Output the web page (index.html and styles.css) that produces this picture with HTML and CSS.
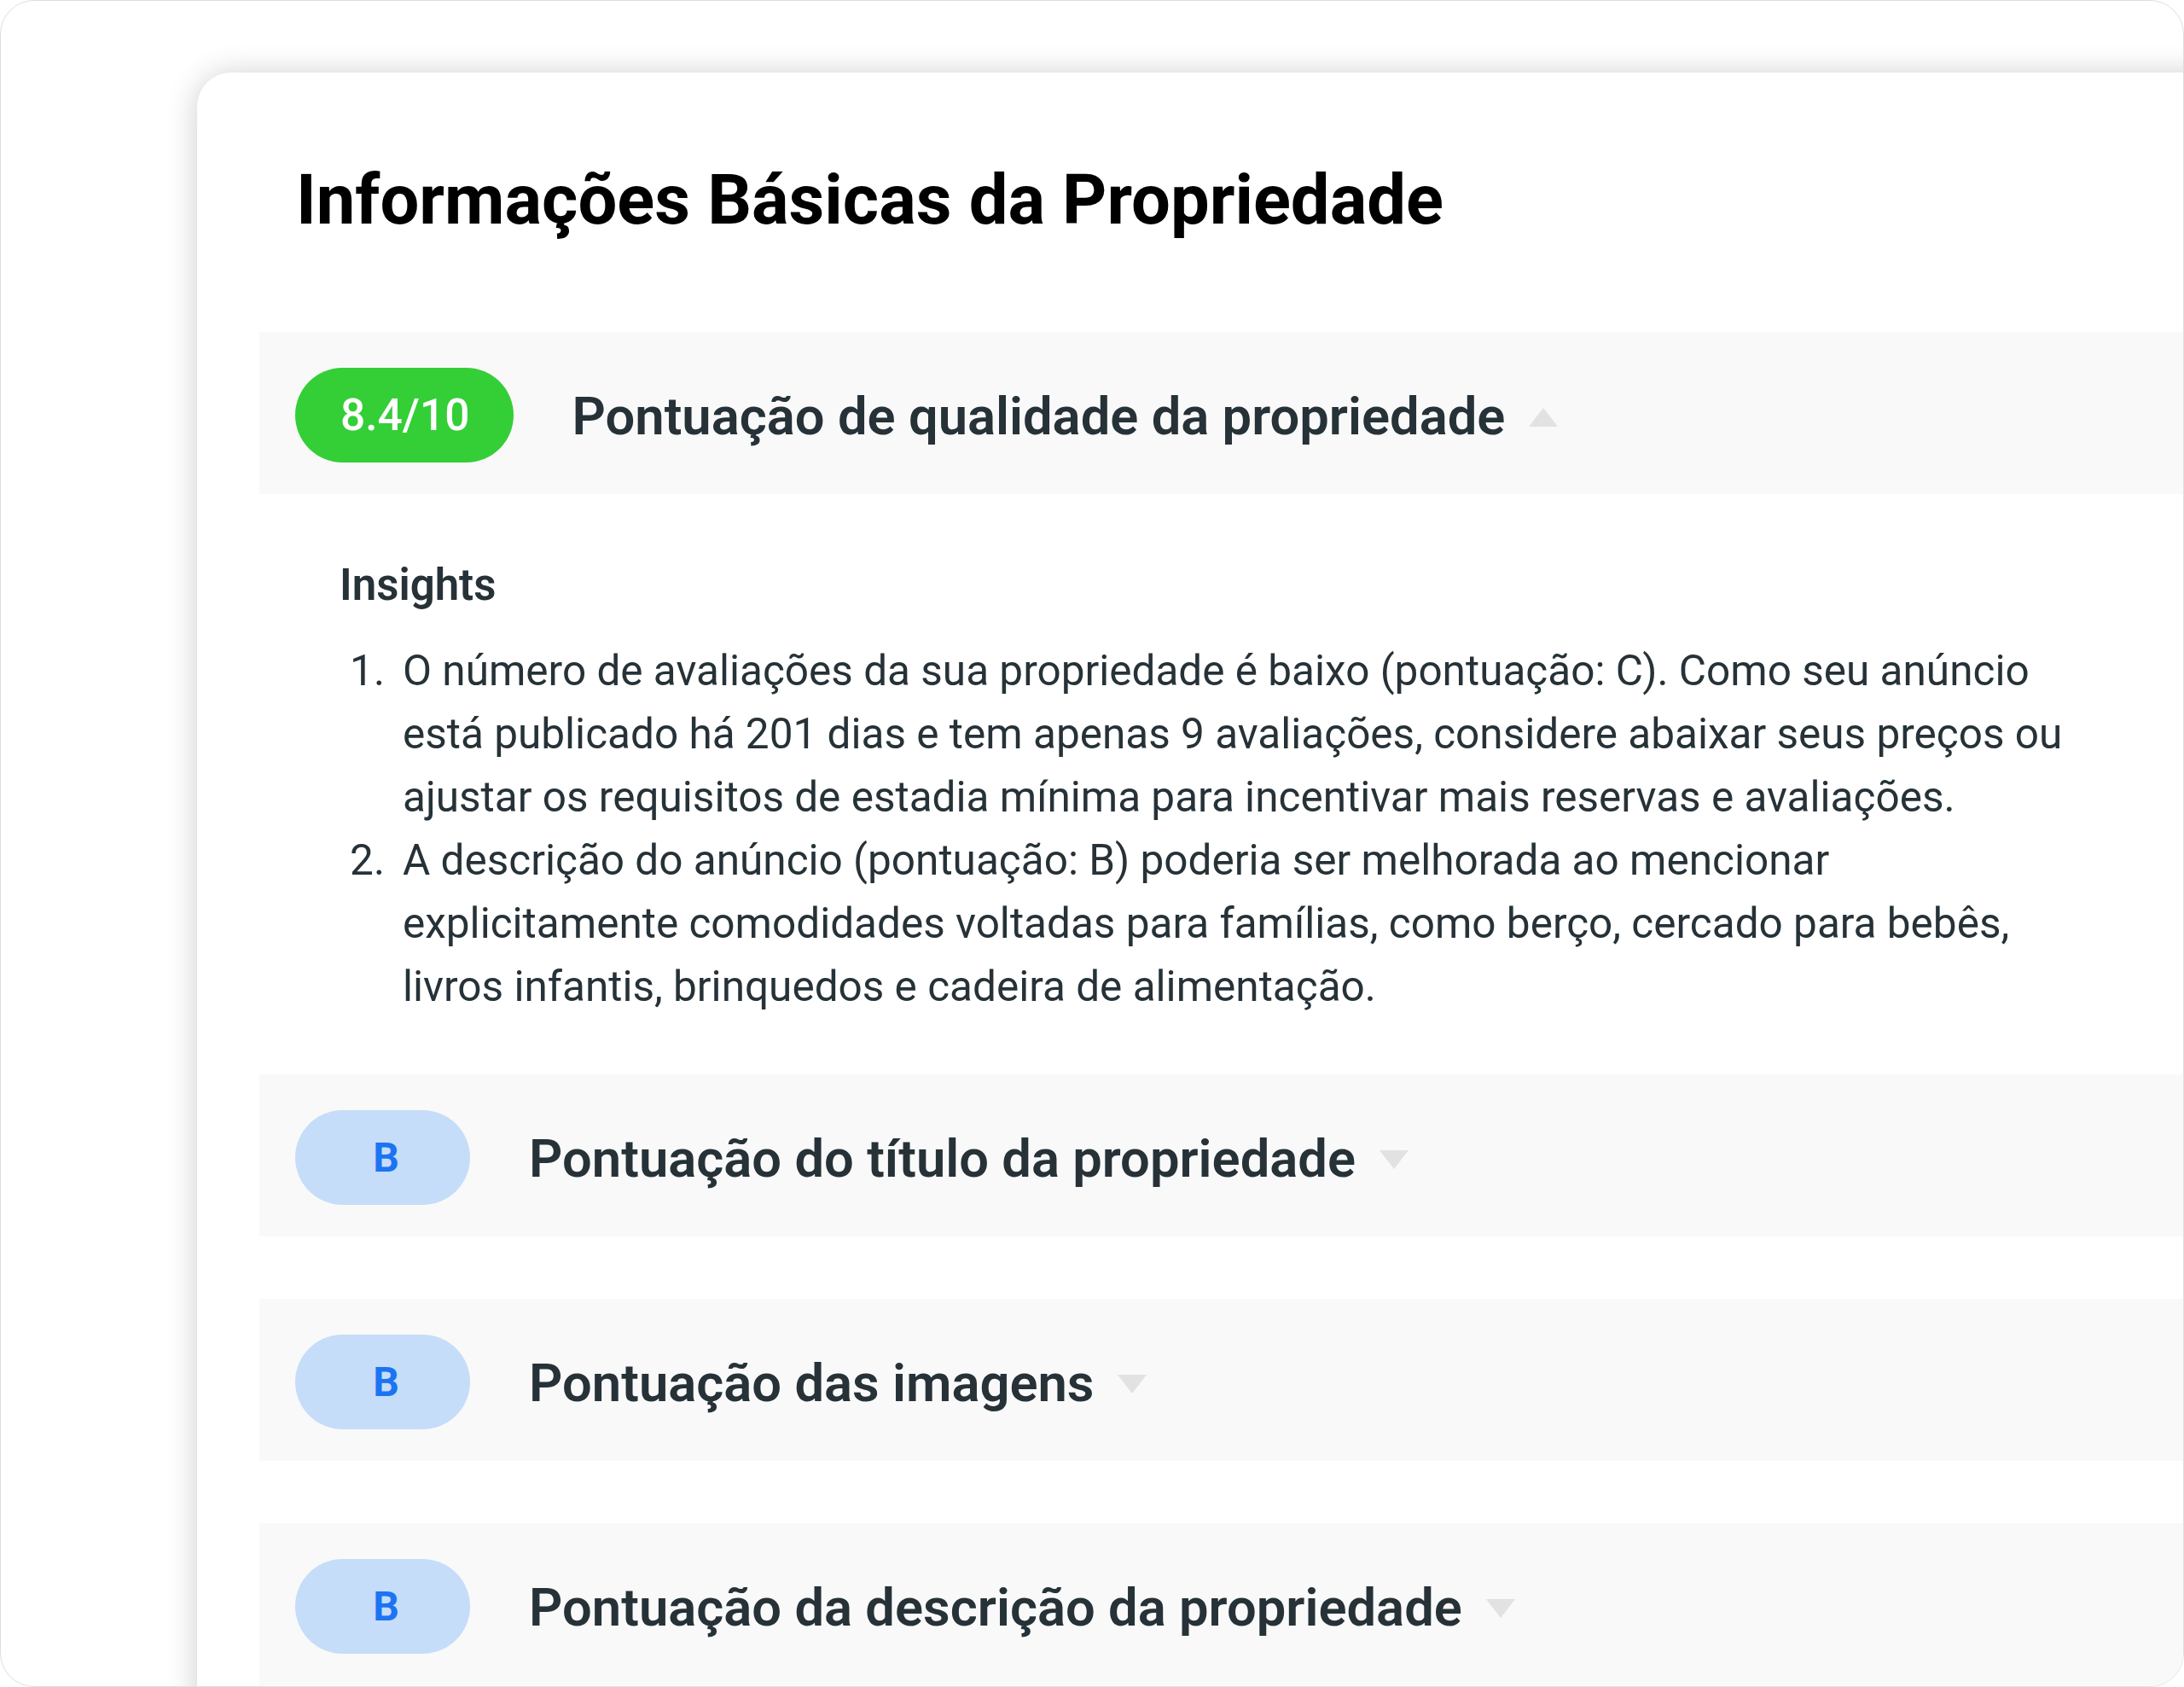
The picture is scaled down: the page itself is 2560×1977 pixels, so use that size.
FILE: index.html
```html
<!DOCTYPE html>
<html lang="pt-BR">
<head>
<meta charset="utf-8">
<title>Informações Básicas da Propriedade</title>
<link rel="stylesheet" href="styles.css">
</head>
<body>
<div class="frame">
  <div class="card">
    <h1 class="title">Informações Básicas da Propriedade</h1>

    <section class="acc open">
      <div class="acc-head">
        <span class="pill pill-green">8.4/10</span>
        <span class="acc-title">Pontuação de qualidade da propriedade</span>
        <svg class="caret" width="34" height="22" viewBox="0 0 34 22"><path d="M17 0L34 22H0Z"/></svg>
      </div>
      <div class="acc-body">
        <h3 class="insights">Insights</h3>
        <ol class="insight-list">
          <li>O número de avaliações da sua propriedade é baixo (pontuação: C). Como seu anúncio está publicado há 201 dias e tem apenas 9 avaliações, considere abaixar seus preços ou ajustar os requisitos de estadia mínima para incentivar mais reservas e avaliações.</li>
          <li>A descrição do anúncio (pontuação: B) poderia ser melhorada ao mencionar explicitamente comodidades voltadas para famílias, como berço, cercado para bebês, livros infantis, brinquedos e cadeira de alimentação.</li>
        </ol>
      </div>
    </section>

    <section class="acc">
      <div class="acc-head">
        <span class="pill pill-blue">B</span>
        <span class="acc-title">Pontuação do título da propriedade</span>
        <svg class="caret" width="34" height="22" viewBox="0 0 34 22"><path d="M0 0H34L17 22Z"/></svg>
      </div>
    </section>

    <section class="acc">
      <div class="acc-head">
        <span class="pill pill-blue">B</span>
        <span class="acc-title">Pontuação das imagens</span>
        <svg class="caret" width="34" height="22" viewBox="0 0 34 22"><path d="M0 0H34L17 22Z"/></svg>
      </div>
    </section>

    <section class="acc">
      <div class="acc-head">
        <span class="pill pill-blue">B</span>
        <span class="acc-title">Pontuação da descrição da propriedade</span>
        <svg class="caret" width="34" height="22" viewBox="0 0 34 22"><path d="M0 0H34L17 22Z"/></svg>
      </div>
    </section>
  </div>
</div>
</body>
</html>
```

FILE: styles.css
```css
* { box-sizing: border-box; }
html, body { margin: 0; padding: 0; background: #fff; }
body { font-family: Roboto, "Noto Sans", sans-serif; color: #263238; }

.frame {
  width: 2560px;
  height: 1977px;
  border: 1px solid #dedede;
  border-radius: 40px;
  overflow: hidden;
  background: #fff;
  padding: 84px 0 0 230px;
}

.card {
  width: 2500px;
  min-height: 2200px;
  background: #fff;
  border-radius: 40px 40px 0 0;
  box-shadow: 0 2px 36px rgba(0, 0, 0, 0.2);
  padding: 102px 0 0 73px;
}

.title {
  margin: 0 0 106px 43px;
  font-size: 81.3px;
  font-weight: 700;
  line-height: 96px;
  color: #000;
}

.acc { margin-bottom: 73px; }
.acc.open { margin-bottom: 0; }

.acc-head {
  height: 190px;
  background: #f9f9f9;
  display: flex;
  align-items: center;
  padding: 5px 0 0 42px;
}

.pill {
  height: 111px;
  border-radius: 56px;
  display: inline-flex;
  align-items: center;
  justify-content: center;
  flex: none;
}
.pill-green {
  background: #34ce37;
  color: #fff;
  padding: 0 52px 0 53px;
  font-size: 51.5px;
  font-weight: 500;
  margin-right: 68px;
}
.pill-blue {
  width: 205px;
  background: #c5ddf8;
  color: #1c74f2;
  font-size: 48px;
  font-weight: 700;
  padding-left: 8px;
  margin-right: 69px;
}

.acc-title {
  font-size: 61.5px;
  font-weight: 600;
  color: #263238;
  padding-top: 2px;
}

.caret { margin: 5px 0 0 28px; fill: #e2e2e2; flex: none; }

.acc-body { padding: 77px 0 66px 94px; }
.insights {
  margin: 0 0 33px;
  font-size: 51px;
  font-weight: 600;
  line-height: 60px;
}
.insight-list {
  margin: 0;
  padding-left: 74px;
  font-size: 49.5px;
  line-height: 74px;
  width: 2052px;
}
.insight-list li::marker {
  content: counter(list-item) ".\2005\2006";
}
```
